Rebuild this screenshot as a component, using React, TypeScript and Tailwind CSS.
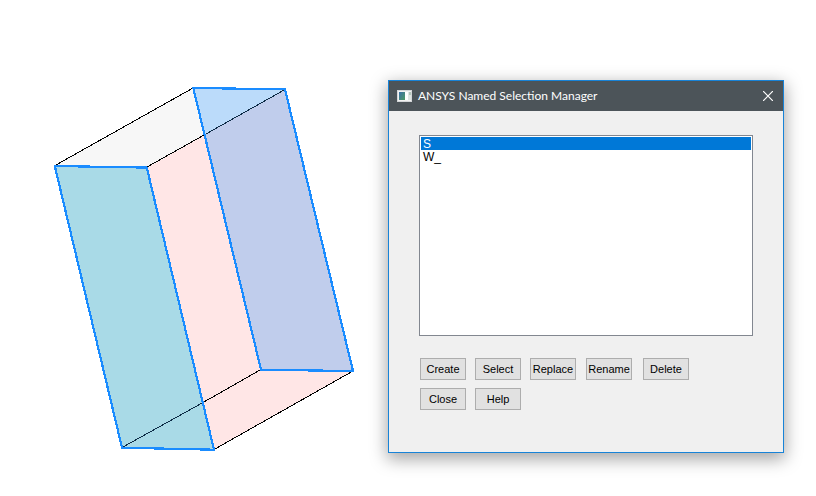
import { useState } from "react";

const SELECTIONS = ["S_", "W_"];

const buttonClass =
  "h-[22px] w-[46px] border border-[#adadad] bg-[#e1e1e1] text-center text-[11px] leading-5 text-black hover:border-[#0078d7] hover:bg-[#e5f1fb]";

function BoxModel() {
  return (
    <svg
      className="block h-[366px] w-[302px]"
      viewBox="53 86 302 366"
      shapeRendering="crispEdges"
      role="img"
      aria-label="Box with two highlighted faces"
    >
      {/* Faces */}
      <polygon points="55,166 193,88 205,135 147,168" fill="#f7f7f7" />
      <polygon points="147,168 205,135 261,370 353,371 214,450" fill="#ffe6e6" />
      <polygon points="193,88 285,89.5 205,135" fill="#bbdbfa" />
      <polygon points="285,89.5 353,371 261,370 205,135" fill="#c0cdec" />
      <polygon points="55,166 147,168 214,450 122,448" fill="#a9dae7" />

      {/* Plain edges */}
      <g stroke="#000000" strokeWidth="1" fill="none">
        <path d="M55 165.5L193 88" />
        <path d="M147 167L205 134.5" />
        <path d="M203 402.5L261 369.5" />
        <path d="M214 449.5L353 371" />
        <path d="M205 134.5L285 89.5M122 447.5L203 402.5" stroke="#0c2a45" />
      </g>

      {/* Highlighted outlines */}
      <g stroke="#1a8cff" strokeWidth="2.2" fill="none" strokeLinejoin="round">
        <path d="M193.3 88L285 89.3L353 371L261 369.8Z" />
        <path d="M54.8 166L146.8 167.6L214 449.7L122 447.7Z" />
      </g>
    </svg>
  );
}

function AppIcon() {
  return (
    <svg className="h-3 w-4" viewBox="0 0 16 12" aria-hidden="true">
      <defs>
        <linearGradient id="pane" x1="0" y1="0" x2="1" y2="1">
          <stop offset="0" stopColor="#3c6fa8" />
          <stop offset="1" stopColor="#4d9a62" />
        </linearGradient>
      </defs>
      <rect x="0" y="0" width="15" height="12" fill="#f2f2f2" />
      <rect x="0.5" y="0.5" width="14" height="11" fill="none" stroke="#d3d6d8" />
      <rect x="2" y="2" width="6" height="8" fill="url(#pane)" />
      <rect x="8" y="2" width="3" height="8" fill="#ffffff" />
      <rect x="11" y="2" width="3" height="8" fill="#dfe5e2" />
      <rect x="12" y="2" width="2" height="3" fill="#b3c6bc" />
    </svg>
  );
}

export default function App() {
  const [selected, setSelected] = useState("S_");

  return (
    <main className="flex min-h-screen items-start bg-white">
      <section className="w-[388px] shrink-0 pt-[86px] pl-[53px]">
        <BoxModel />
      </section>

      <section
        role="dialog"
        aria-labelledby="dialog-title"
        className="mt-20 mr-8 flex-1 border border-[#1883d7] bg-[#f0f0f0] pb-[42px] shadow-[0_5px_16px_1px_rgba(0,0,0,0.36)]"
      >
        {/* Title bar */}
        <header className="flex h-[30px] items-center bg-[#4c5459] pr-[7px] pl-2 text-white">
          <AppIcon />
          <h1
            id="dialog-title"
            className="ml-[5px] flex-1 font-[Lato,sans-serif] text-[12px] leading-4 whitespace-nowrap"
          >
            ANSYS Named Selection Manager
          </h1>
          <button type="button" aria-label="Close window" className="flex size-4 items-center justify-center">
            <svg className="size-[10px]" viewBox="0 0 10 10" aria-hidden="true">
              <path d="M0 0L10 10M10 0L0 10" stroke="#ffffff" strokeWidth="1.2" fill="none" />
            </svg>
          </button>
        </header>

        <div className="px-[30px] pt-6 font-['Liberation_Sans',Arial,sans-serif]">
          <select
            size={15}
            aria-label="Named selections"
            value={selected}
            onChange={(e) => setSelected(e.target.value)}
            className="block h-[201px] w-full appearance-none overflow-hidden rounded-none border border-[#828790] bg-white p-px text-[12px] text-black outline-none"
          >
            {SELECTIONS.map((name) => (
              <option
                key={name}
                value={name}
                className="block h-[13px] min-h-0 px-[2px] py-0 leading-[13px] checked:bg-[linear-gradient(#0078d7,#0078d7)] checked:[-webkit-text-fill-color:#ffffff]"
              >
                {name}
              </option>
            ))}
          </select>

          {/* Actions */}
          <div className="mt-[22px] flex items-start gap-[10px] pl-px">
            <div className="grid grid-cols-[repeat(3,46px)] gap-x-[9px] gap-y-2">
              <button type="button" className={buttonClass}>Create</button>
              <button type="button" className={buttonClass}>Select</button>
              <button type="button" className={buttonClass}>Replace</button>
              <button type="button" className={buttonClass}>Close</button>
              <button type="button" className={buttonClass}>Help</button>
            </div>
            <div className="flex gap-[11px]">
              <button type="button" className={buttonClass}>Rename</button>
              <button type="button" className={buttonClass}>Delete</button>
            </div>
          </div>
        </div>
      </section>
    </main>
  );
}
